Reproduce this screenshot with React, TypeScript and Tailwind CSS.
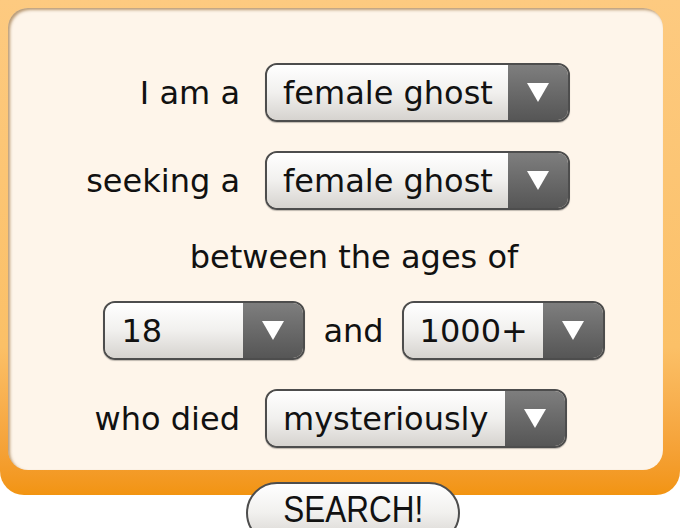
import React from 'react';

const labelFont = { fontFamily: '"DejaVu Sans", Verdana, sans-serif' };

type SelectProps = { value: string; width: string };

const Select: React.FC<SelectProps> = ({ value, width }) => (
  <div
    className={`flex h-[59px] ${width} overflow-hidden rounded-[12px] border-2 border-[#4d4d4d] shadow-[0_1px_1px_rgba(0,0,0,0.25)]`}
  >
    <div className="flex flex-1 items-center bg-linear-to-b from-[#ffffff] via-[#f1f0ee] to-[#d6d3cf] pl-[16px] text-[32px] text-[#111]">
      {value}
    </div>
    <div className="flex w-[60px] items-center justify-center bg-linear-to-b from-[#7e7e7e] to-[#565656]">
      <svg width="22" height="19" viewBox="0 0 22 19">
        <polygon points="0,0 22,0 11,19" fill="#fff" />
      </svg>
    </div>
  </div>
);

export default function App() {
  return (
    <div className="h-[528px] w-[680px] overflow-hidden bg-white" style={labelFont}>
      {/* Orange frame */}
      <div className="h-[495px] rounded-b-[24px] bg-linear-to-b from-[#fdca80] via-[#fbc067] via-70% to-[#f29410] pl-[8px] pr-[17px] pt-[8px]">
        {/* Cream panel */}
        <div className="flex h-[462px] flex-col rounded-[20px] bg-[#fef5ea] pl-[37px] pt-[55px] shadow-[inset_2px_2px_3px_rgba(130,80,20,0.55)]">
          <div className="flex items-center">
            <div className="w-[195px] text-right text-[32px] text-[#111]">I am a</div>
            <div className="ml-[25px]">
              <Select value="female ghost" width="w-[305px]" />
            </div>
          </div>

          <div className="mt-[29px] flex items-center">
            <div className="w-[195px] text-right text-[32px] text-[#111]">seeking a</div>
            <div className="ml-[25px]">
              <Select value="female ghost" width="w-[305px]" />
            </div>
          </div>

          <div className="mt-[27px] flex h-[40px] items-center justify-center text-[32px] text-[#111]">
            between the ages of
          </div>

          <div className="mt-[24px] flex items-center justify-center gap-[18px]">
            <Select value="18" width="w-[202px]" />
            <div className="text-[32px] text-[#111]">and</div>
            <Select value="1000+" width="w-[203px]" />
          </div>

          <div className="mt-[29px] flex items-center">
            <div className="w-[195px] text-right text-[32px] text-[#111]">who died</div>
            <div className="ml-[25px]">
              <Select value="mysteriously" width="w-[302px]" />
            </div>
          </div>
        </div>
      </div>

      {/* Search button */}
      <div className="-mt-[13px] flex pl-[246px]">
        <button className="flex h-[62px] w-[214px] items-start justify-center rounded-full border-2 border-[#4d4d4d] bg-linear-to-b from-[#ffffff] via-[#f1f0ee] to-[#d6d3cf] pt-[4px]">
          <span
            className="inline-block scale-x-[0.85] text-[37px] leading-[44px] text-[#111]"
            style={{ fontFamily: '"Liberation Sans", Arial, sans-serif' }}
          >
            SEARCH!
          </span>
        </button>
      </div>
    </div>
  );
}
